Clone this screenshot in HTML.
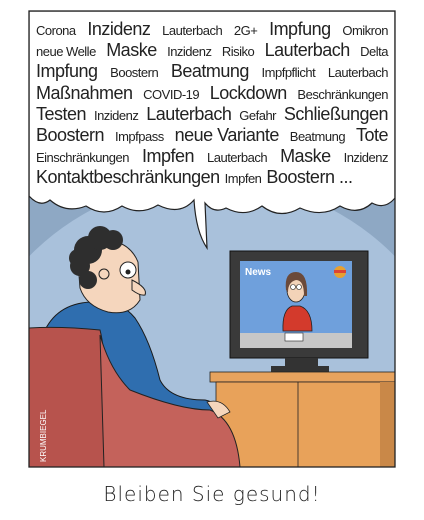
<!DOCTYPE html>
<html><head><meta charset="utf-8"><style>
html,body{margin:0;padding:0;background:#fff;width:424px;height:520px;overflow:hidden}
.wrap{position:relative;width:424px;height:520px;overflow:hidden}
svg{position:absolute;left:0;top:0}
.txt{position:absolute;left:36px;top:19px;width:352px;font-family:"Liberation Sans",sans-serif;color:#222;}
.l{display:flex;justify-content:space-between;align-items:baseline;height:21.2px;white-space:nowrap;letter-spacing:-0.5px}
.s{font-size:13px}.b{font-size:18px}
.cap{position:absolute;left:0;width:424px;top:482px;text-align:center;font-family:"DejaVu Sans",sans-serif;font-size:20px;color:#222;letter-spacing:1px;font-weight:300}
</style></head><body><div class="wrap">
<svg width="424" height="520" viewBox="0 0 424 520">
<defs><clipPath id="f"><rect x="29" y="11" width="366" height="456"/></clipPath></defs>
<g clip-path="url(#f)">
<rect x="29" y="11" width="366" height="456" fill="#8ea8c4"/>
<ellipse cx="212" cy="420" rx="250" ry="240" fill="#a9c1db"/>
<path d="M29 11H395V198 Q385 210 372 203 Q358 216 340 206 Q322 218 300 208 Q280 220 262 206 Q245 218 226 208 Q214 214 205 203 L207 248 Q196 232 194 200 Q180 216 158 205 Q140 216 122 206 Q104 218 86 206 Q66 214 50 200 Q40 208 29 196Z" fill="#fff" stroke="#222" stroke-width="1.2"/>
<rect x="230" y="251" width="138" height="107" fill="#3a3a3a" stroke="#111"/>
<rect x="240" y="261" width="112" height="87" fill="#6fa0dc"/>
<rect x="240" y="333" width="112" height="15" fill="#c7c7c7"/>
<text x="245" y="275" font-family="Liberation Sans,sans-serif" font-weight="bold" font-size="10" fill="#fff">News</text>
<circle cx="340" cy="272" r="6" fill="#e8a030"/><rect x="334" y="270" width="12" height="3" fill="#d43"/>
<path d="M283 331 Q282 310 292 306 L300 306 Q312 310 312 331Z" fill="#d33a2c" stroke="#222" stroke-width=".8"/>
<ellipse cx="296" cy="290" rx="9" ry="12" fill="#f3d3b8" stroke="#222" stroke-width=".8"/>
<path d="M286 290 Q284 272 296 272 Q308 272 307 296 L304 296 Q304 280 296 280 Q288 282 288 292Z" fill="#6b4a3a"/>
<circle cx="293" cy="287" r="2.5" fill="#fff" stroke="#222" stroke-width=".6"/><circle cx="299" cy="287" r="2.5" fill="#fff" stroke="#222" stroke-width=".6"/>
<rect x="285" y="333" width="18" height="8" fill="#fff" stroke="#222" stroke-width=".6"/>
<rect x="285" y="358" width="33" height="9" fill="#333"/>
<rect x="271" y="366" width="58" height="6" fill="#333"/>
<rect x="210" y="372" width="185" height="10" fill="#e7a35e" stroke="#222" stroke-width=".8"/>
<rect x="216" y="382" width="179" height="85" fill="#e8a25a" stroke="#222" stroke-width=".8"/>
<rect x="380" y="382" width="15" height="85" fill="#c98848"/>
<line x1="298" y1="382" x2="298" y2="467" stroke="#222" stroke-width=".8"/>
<path d="M45 330 Q60 300 100 302 Q120 300 135 318 Q150 340 160 380 Q170 400 205 400 Q218 402 220 418 L150 440 L60 420Z" fill="#2f6eaf" stroke="#1a1a1a" stroke-width="1"/>
<path d="M78 262 Q80 240 106 240 Q130 242 138 262 L140 300 Q130 316 108 312 Q86 306 80 288Z" fill="#f5d6bd" stroke="#222" stroke-width="1"/>
<path d="M132 280 Q148 288 145 295 Q140 296 132 290Z" fill="#f5d6bd" stroke="#222" stroke-width="1"/>
<g fill="#2e2e2e"><circle cx="88" cy="250" r="14"/><circle cx="100" cy="238" r="12"/><circle cx="113" cy="240" r="10"/><circle cx="80" cy="266" r="10"/><circle cx="88" cy="280" r="9"/><circle cx="78" cy="258" r="9"/></g>
<circle cx="128" cy="270" r="8" fill="#fff" stroke="#222"/><circle cx="128" cy="272" r="2.5" fill="#222"/>
<circle cx="104" cy="274" r="5" fill="#f5d6bd" stroke="#222"/>
<path d="M29 328 Q60 326 100 330 Q108 360 106 467 L29 467Z" fill="#b7534d" stroke="#222" stroke-width="1"/>
<path d="M100 335 Q110 370 130 390 Q180 410 210 410 Q236 420 240 467 L104 467Z" fill="#c4625b" stroke="#222" stroke-width="1"/>
<path d="M207 402 Q222 398 230 412 L218 418Z" fill="#f5d6bd" stroke="#222" stroke-width=".8"/>
<text transform="translate(46 462) rotate(-90)" font-family="Liberation Sans,sans-serif" font-size="8" fill="#fff">KRUMBIEGEL</text>
</g>
<rect x="29" y="11" width="366" height="456" fill="none" stroke="#222" stroke-width="1.3"/>
</svg>
<div class="txt">
<div class="l"><span class="s">Corona</span><span class="b">Inzidenz</span><span class="s">Lauterbach</span><span class="s">2G+</span><span class="b">Impfung</span><span class="s">Omikron</span></div>
<div class="l"><span class="s">neue Welle</span><span class="b">Maske</span><span class="s">Inzidenz</span><span class="s">Risiko</span><span class="b">Lauterbach</span><span class="s">Delta</span></div>
<div class="l"><span class="b">Impfung</span><span class="s">Boostern</span><span class="b">Beatmung</span><span class="s">Impfpflicht</span><span class="s">Lauterbach</span></div>
<div class="l"><span class="b">Maßnahmen</span><span class="s">COVID-19</span><span class="b">Lockdown</span><span class="s">Beschränkungen</span></div>
<div class="l"><span class="b">Testen</span><span class="s">Inzidenz</span><span class="b">Lauterbach</span><span class="s">Gefahr</span><span class="b">Schließungen</span></div>
<div class="l"><span class="b">Boostern</span><span class="s">Impfpass</span><span class="b">neue Variante</span><span class="s">Beatmung</span><span class="b">Tote</span></div>
<div class="l"><span class="s">Einschränkungen</span><span class="b">Impfen</span><span class="s">Lauterbach</span><span class="b">Maske</span><span class="s">Inzidenz</span></div>
<div class="l" style="justify-content:flex-start;gap:5px"><span class="b">Kontaktbeschränkungen</span><span class="s">Impfen</span><span class="b">Boostern ...</span></div>
</div>
<div class="cap">Bleiben Sie gesund!</div>
</div></body></html>
